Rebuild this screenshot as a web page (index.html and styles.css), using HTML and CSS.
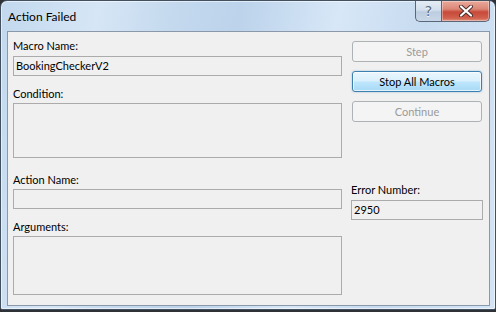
FILE: index.html
```html
<!DOCTYPE html>
<html lang="en">
<head>
    <meta charset="UTF-8">
    <title>Action Failed</title>
    <link rel="stylesheet" href="styles.css">
</head>
<body>
    <section class="window">
        <header class="titlebar">
            <span class="title">Action Failed</span>
            <div class="controls">
                <button class="ctl help">?</button>
                <button class="ctl close">
                    <svg width="16" height="12" viewBox="0 0 16 12">
                        <path d="M3 1.5 L13 10.5 M13 1.5 L3 10.5" stroke="#4a2a2a" stroke-width="4" stroke-linecap="round"/>
                        <path d="M3 1.5 L13 10.5 M13 1.5 L3 10.5" stroke="#ffffff" stroke-width="2.2" stroke-linecap="round"/>
                    </svg>
                </button>
            </div>
        </header>
        <section class="client">
            <section class="fields">
                <div class="label first">Macro Name:</div>
                <div class="box single">BookingCheckerV2</div>

                <div class="label">Condition:</div>
                <div class="box condition"></div>

                <div class="label wide">Action Name:</div>
                <div class="box single"></div>

                <div class="label">Arguments:</div>
                <div class="box arguments"></div>
            </section>
            <section class="side">
                <button class="btn disabled">Step</button>
                <button class="btn default">Stop All Macros</button>
                <button class="btn disabled">Continue</button>

                <div class="label error-label">Error Number:</div>
                <div class="box single">2950</div>
            </section>
        </section>
    </section>
</body>
</html>
```

FILE: styles.css
```css
*{margin: 0; padding: 0; box-sizing: border-box;}
body{
    width: 496px; height: 312px;
    background: #2e3136;
    font-family: Lato, "Liberation Sans", sans-serif;
    font-size: 11px; color: #000;
    overflow: hidden;}

.window{
    width: 496px; height: 310px;
    display: flex; flex-direction: column;
    padding: 0 5px 3px 6px;
    border: 1px solid #42505f;
    border-radius: 7px 7px 2px 2px;
    background: linear-gradient(100deg, #c2d8ee 0%, #d6e6f6 18%, #c4d9ee 32%, #bcd3eb 44%, #d7e7f7 62%, #c7dbf0 78%, #d3e4f5 100%);
    box-shadow: inset 0 0 0 1px rgba(255,255,255,0.55);}

.titlebar{
    height: 30px; flex: none;
    display: flex; align-items: flex-start;
    padding-left: 1px;}
.title{font-size: 12px; line-height: 14px; margin-top: 9px; color: #000;}

.controls{margin-left: auto; display: flex; height: 21px;}
.ctl{
    height: 21px; border: 1px solid #5b6777; border-top: none;
    display: flex; align-items: center; justify-content: center;
    font-family: "DejaVu Sans", sans-serif;}
.help{
    width: 26px; border-right: none;
    border-radius: 0 0 0 5px;
    background: linear-gradient(#e4ecf5 0%, #d3dfec 45%, #bccde0 55%, #c9d8e8 100%);
    color: #5c6a7b; font-size: 14px; line-height: 14px;
    text-shadow: 0 1px 0 #fff;}
.close{
    width: 49px;
    border-radius: 0 0 5px 0;
    background: linear-gradient(#eaa99b 0%, #dc8777 40%, #c8493a 55%, #d0604c 85%, #e19181 100%);
    box-shadow: inset 0 0 0 1px rgba(255,255,255,0.35);}

.client{
    flex: 1;
    display: flex;
    background: #f0f0f0;
    border: 1px solid #8a98a9;
    padding: 0 5px 0 5px;}

.fields{width: 329px; display: flex; flex-direction: column;}
.label{height: 14px; line-height: 14px; margin-top: 11px; margin-bottom: 2px;}
.label.first{margin-top: 7px; margin-bottom: 3px;}
.label.wide{margin-top: 15px;}

.box{
    border: 1px solid #ababab;
    background: #f0f0f0;
    padding-left: 2px;
    line-height: 18px;}
.single{height: 20px;}
.condition{height: 55px;}
.arguments{height: 59px;}

.side{
    width: 132px; margin-left: 9px;
    display: flex; flex-direction: column;}
.btn{
    height: 21px; margin: 0 1px 9px 1px;
    border-radius: 3px;
    font-family: Lato, "Liberation Sans", sans-serif;
    font-size: 11px;}
.btn:first-child{margin-top: 9px;}
.disabled{
    border: 1px solid #adb2b5;
    background: #f4f4f4; color: #9a9a9a;}
.default{
    border: 1px solid #3c7fb1; color: #000;
    background: linear-gradient(#eaf6fd 0%, #d9f0fc 48%, #bee6fd 52%, #a7d9f5 100%);
    box-shadow: inset 0 0 0 1px rgba(255,255,255,0.7), 0 0 2px rgba(60,127,177,0.5);}
.error-label{margin-top: 52px; margin-bottom: 3px;}
```
